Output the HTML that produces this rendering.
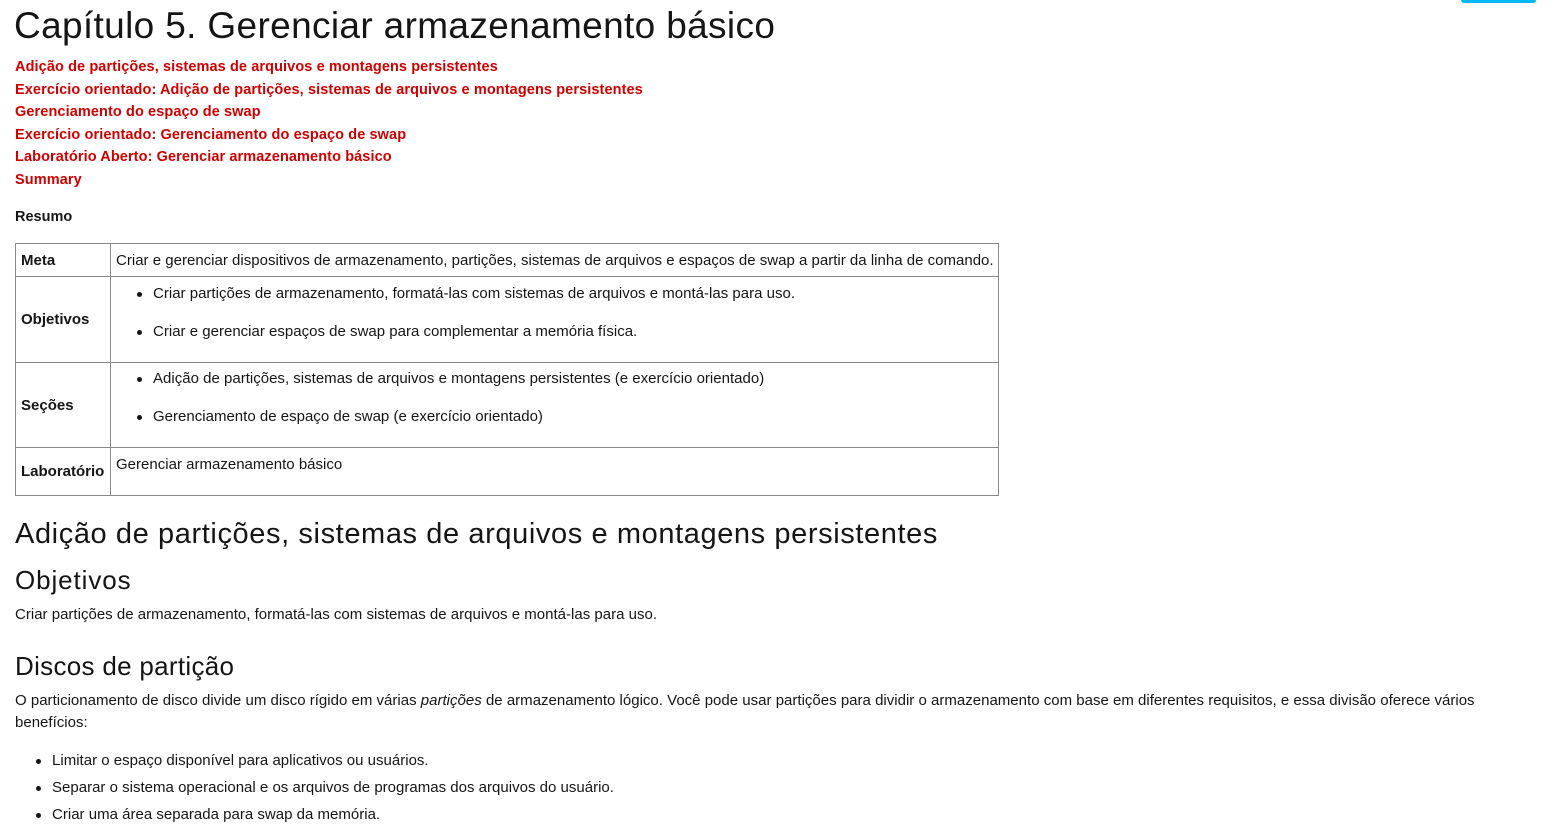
<!DOCTYPE html>
<html><head><meta charset="utf-8"><style>
*{margin:0;padding:0;box-sizing:border-box}
body{width:1549px;height:830px;overflow:hidden;background:#fff;color:#151515;font-family:"Liberation Sans",sans-serif;position:relative}
.a{position:absolute;white-space:nowrap}
.t{font-size:15px;letter-spacing:0.01px}
.l{font-size:14.5px;font-weight:bold;color:#d00000;letter-spacing:0.1px}
.c{position:absolute;border:1px solid #8a8a8a}
.b{font-weight:bold;font-size:15px}
.dot{display:inline-block;width:5px;height:5px;border-radius:50%;background:#151515;position:absolute}
</style></head><body>
<div style="position:absolute;left:1461px;top:0;width:75px;height:3px;background:#00b9f2;border-radius:0 0 3px 3px"></div>
<div class="a" style="left:14px;top:5px;font-size:37px;letter-spacing:0.35px">Capítulo 5. Gerenciar armazenamento básico</div>
<div class="a l" style="left:15px;top:59px">Adição de partições, sistemas de arquivos e montagens persistentes</div>
<div class="a l" style="left:15px;top:82px">Exercício orientado: Adição de partições, sistemas de arquivos e montagens persistentes</div>
<div class="a l" style="left:15px;top:104px">Gerenciamento do espaço de swap</div>
<div class="a l" style="left:15px;top:127px">Exercício orientado: Gerenciamento do espaço de swap</div>
<div class="a l" style="left:15px;top:149px">Laboratório Aberto: Gerenciar armazenamento básico</div>
<div class="a l" style="left:15px;top:172px">Summary</div>
<div class="a b" style="left:15px;top:209px;font-size:14.5px">Resumo</div>

<div class="c" style="left:15px;top:243px;width:984px;height:253px"></div>
<div class="c" style="left:110px;top:243px;width:1px;height:253px;border:none;background:#8a8a8a"></div>
<div class="c" style="left:15px;top:276px;width:984px;height:1px;border:none;background:#8a8a8a"></div>
<div class="c" style="left:15px;top:362px;width:984px;height:1px;border:none;background:#8a8a8a"></div>
<div class="c" style="left:15px;top:447px;width:984px;height:1px;border:none;background:#8a8a8a"></div>

<div class="a b" style="left:21px;top:252px">Meta</div>
<div class="a t" style="left:116px;top:252px">Criar e gerenciar dispositivos de armazenamento, partições, sistemas de arquivos e espaços de swap a partir da linha de comando.</div>
<div class="a b" style="left:21px;top:311px">Objetivos</div>
<span class="dot" style="left:137px;top:292px"></span>
<div class="a t" style="left:153px;top:285px">Criar partições de armazenamento, formatá-las com sistemas de arquivos e montá-las para uso.</div>
<span class="dot" style="left:137px;top:330px"></span>
<div class="a t" style="left:153px;top:323px">Criar e gerenciar espaços de swap para complementar a memória física.</div>
<div class="a b" style="left:21px;top:397px">Seções</div>
<span class="dot" style="left:137px;top:377px"></span>
<div class="a t" style="left:153px;top:370px">Adição de partições, sistemas de arquivos e montagens persistentes (e exercício orientado)</div>
<span class="dot" style="left:137px;top:415px"></span>
<div class="a t" style="left:153px;top:408px">Gerenciamento de espaço de swap (e exercício orientado)</div>
<div class="a b" style="left:21px;top:463px">Laboratório</div>
<div class="a t" style="left:116px;top:456px">Gerenciar armazenamento básico</div>

<div class="a" style="left:15px;top:518px;font-size:29px;letter-spacing:0.6px">Adição de partições, sistemas de arquivos e montagens persistentes</div>
<div class="a" style="left:15px;top:565px;font-size:26px;letter-spacing:0.9px">Objetivos</div>
<div class="a t" style="left:15px;top:606px">Criar partições de armazenamento, formatá-las com sistemas de arquivos e montá-las para uso.</div>
<div class="a" style="left:15px;top:651px;font-size:26px;letter-spacing:0.3px">Discos de partição</div>
<div class="a t" style="left:15px;top:692px">O particionamento de disco divide um disco rígido em várias <i>partições</i> de armazenamento lógico. Você pode usar partições para dividir o armazenamento com base em diferentes requisitos, e essa divisão oferece vários</div>
<div class="a t" style="left:15px;top:714px">benefícios:</div>
<span class="dot" style="left:36px;top:759px"></span>
<div class="a t" style="left:52px;top:752px">Limitar o espaço disponível para aplicativos ou usuários.</div>
<span class="dot" style="left:36px;top:786px"></span>
<div class="a t" style="left:52px;top:779px">Separar o sistema operacional e os arquivos de programas dos arquivos do usuário.</div>
<span class="dot" style="left:36px;top:813px"></span>
<div class="a t" style="left:52px;top:806px">Criar uma área separada para swap da memória.</div>
</body></html>
